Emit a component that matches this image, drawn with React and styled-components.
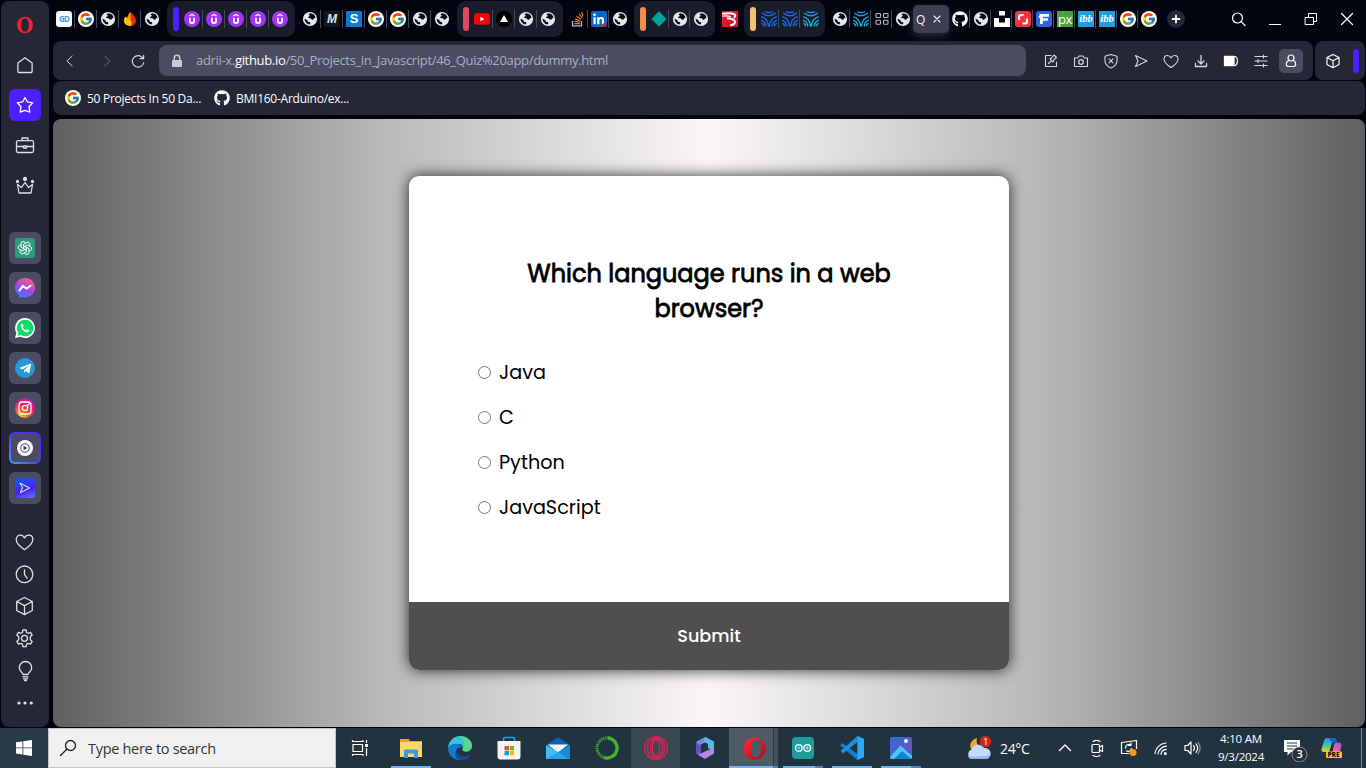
import React from "react";
import styled, { createGlobalStyle, css } from "styled-components";
import { FcGoogle } from "react-icons/fc";
import { FaGithub, FaTelegramPlane } from "react-icons/fa";
import { TbBrandOpenai } from "react-icons/tb";

const ui = `"Open Sans", "Noto Sans", sans-serif`;
const geo = `Poppins, Inter, "Open Sans", sans-serif`;

const GlobalStyle = createGlobalStyle`
  * { box-sizing: border-box; }
  body { margin: 0; background: #020410; overflow: hidden; font-family: ${ui}; }
  svg { display: block; flex: none; }
`;

/* ---------- shell ---------- */
const Desktop = styled.div`
  width: 1366px;
  height: 768px;
  display: flex;
  flex-direction: column;
  background: #020410;
`;
const Browser = styled.div`
  height: 728px;
  display: flex;
  gap: 4px;
  padding: 0 1px 1px;
`;
const Sidebar = styled.nav`
  width: 48px;
  margin-top: 1px;
  padding-top: 4px;
  background: #252834;
  border-radius: 8px;
  display: flex;
  flex-direction: column;
  align-items: center;
  color: #dcdfe6;
`;
const SideGroup = styled.div`
  display: flex;
  flex-direction: column;
  margin-top: ${(p) => p.$gap || 0}px;
`;
const SideSlot = styled.div`
  height: ${(p) => p.$h || 40}px;
  display: flex;
  align-items: center;
  justify-content: center;
`;
const SideTile = styled.div`
  width: 32px;
  height: 32px;
  border-radius: 6px;
  display: flex;
  align-items: center;
  justify-content: center;
  background: ${(p) => p.$bg || "transparent"};
  ${(p) =>
    p.$ring &&
    css`
      border: 2px solid transparent;
      background: linear-gradient(#4a4d62, #4a4d62) padding-box,
        linear-gradient(225deg, #4a22ff, #4a3cff 50%, #4f9dff) border-box;
    `}
`;
const Badge = styled.div`
  width: 20px;
  height: 20px;
  border-radius: ${(p) => p.$r};
  background: ${(p) => p.$bg};
  display: flex;
  align-items: center;
  justify-content: center;
  color: #fff;
`;
const Main = styled.div`
  width: 1312px;
  display: flex;
  flex-direction: column;
`;

/* ---------- tabs ---------- */
const TabStrip = styled.div`
  height: 41px;
  padding-top: 1px;
  display: flex;
  align-items: flex-start;
`;
const TabRun = styled.div`
  display: flex;
  height: 36px;
  align-items: center;
  margin-left: ${(p) => p.$ml || 0}px;
`;
const TabGroup = styled(TabRun)`
  margin-left: 4px;
  margin-right: 4px;
  padding: 0 4px 0 6px;
  background: #191c29;
  border-radius: 9px;
`;
const GroupBar = styled.div`
  width: 6px;
  height: 24px;
  margin-right: 2px;
  border-radius: 3px;
  background: ${(p) => p.$c};
`;
const Tab = styled.div`
  width: ${(p) => p.$w}px;
  height: 18px;
  padding-left: 3px;
  display: flex;
  align-items: center;
  border-right: 1px solid ${(p) => (p.$last ? "transparent" : "#454858")};
`;
const Fav = styled.div`
  width: 16px;
  height: 16px;
  flex: none;
  display: flex;
  align-items: center;
  justify-content: center;
  border-radius: ${(p) => p.$r || 0};
  background: ${(p) => p.$bg || "transparent"};
  color: ${(p) => p.$c || "#fff"};
  font: ${(p) => p.$font || `700 10px/14px ${ui}`};
  letter-spacing: ${(p) => p.$ls || 0};
`;
const ActiveTab = styled.div`
  width: 36px;
  height: 28px;
  margin-top: 4px;
  padding: 0 8px 0 3px;
  border-radius: 5px;
  background: #3c3f54;
  box-shadow: 0 3px 8px rgba(90, 93, 120, 0.45);
  display: flex;
  align-items: center;
  justify-content: space-between;
  color: #f0f1f4;
  font-size: 12px;
`;
const NewTab = styled.div`
  width: 18px;
  height: 18px;
  margin: 9px 0 0 8px;
  border-radius: 50%;
  background: #252834;
  display: flex;
  align-items: center;
  justify-content: center;
`;
const WindowButtons = styled.div`
  display: flex;
  margin: 8px 0 0 44px;
  gap: 16px;
`;

/* ---------- address row ---------- */
const AddressRow = styled.div`
  height: 39px;
  display: flex;
  gap: 2px;
`;
const Panel = styled.div`
  background: #252834;
  border-radius: 8px;
  display: flex;
  align-items: center;
  color: #d5d8df;
`;
const AddressPanel = styled(Panel)`
  width: 1260px;
  padding-left: 9px;
`;
const NavButtons = styled.div`
  display: flex;
  width: 97px;
`;
const UrlBox = styled.div`
  width: 867px;
  height: 31px;
  border-radius: 8px;
  background: #4a4d62;
  display: flex;
  align-items: center;
  padding-left: 12px;
  gap: 13px;
  font-size: 13px;
  letter-spacing: -0.32px;
  color: #abb0c0;
  white-space: nowrap;
  span { margin-top: -1px; }
  b { font-weight: 400; color: #fff; }
`;
const Actions = styled.div`
  display: flex;
  margin-left: 13px;
  gap: 6px;
`;
const ProfileTile = styled.div`
  width: 24px;
  height: 24px;
  border-radius: 5px;
  background: #4a4d62;
`;
const ExtPanel = styled(Panel)`
  width: 50px;
  justify-content: space-between;
  padding: 0 6px;
`;
const Accent = styled.div`
  width: 6px;
  height: 24px;
  border-radius: 3px;
  background: #4d1fff;
`;
const Bookmarks = styled(Panel)`
  height: 34px;
  margin: 1px 0 4px;
  padding-left: 12px;
  gap: 13px;
`;
const Bookmark = styled.div`
  display: flex;
  align-items: center;
  gap: 6px;
  width: ${(p) => p.$w}px;
  color: #fff;
  font-size: 12px;
  letter-spacing: ${(p) => p.$ls}px;
  white-space: nowrap;
`;
const GoogleDisc = styled.div`
  width: 16px;
  height: 16px;
  flex: none;
  border-radius: 50%;
  background: #fff;
  display: flex;
  align-items: center;
  justify-content: center;
`;

/* ---------- quiz page ---------- */
const Page = styled.main`
  flex: 1;
  border-radius: 8px;
  background: linear-gradient(90deg, #606060, #b9b9b9 25%, #fbf7f8 50%, #b9b9b9 75%, #606060);
  display: flex;
  align-items: center;
  justify-content: center;
`;
const Card = styled.section`
  width: 600px;
  height: 494px;
  border-radius: 10px;
  background: #fff;
  overflow: hidden;
  box-shadow: 0 0 15px rgba(0, 0, 0, 0.8);
  font-family: ${geo};
  color: #000;
`;
const CardBody = styled.div`
  height: 426px;
  padding: 64px;
`;
const Question = styled.h2`
  margin: 0;
  padding: 16px;
  text-align: center;
  font-size: 24px;
  line-height: 35px;
  font-weight: 400;
  -webkit-text-stroke: 0.8px #000;
`;
const Options = styled.ul`
  list-style: none;
  margin: 16px 0 0;
  padding: 0;
  display: flex;
  flex-direction: column;
  gap: 16px;
`;
const Option = styled.li`
  height: 29px;
  display: flex;
  align-items: center;
  padding-left: 5px;
  gap: 8px;
  font-size: 19.2px;
`;
const Radio = styled.span`
  width: 13px;
  height: 13px;
  border: 1px solid #767676;
  border-radius: 50%;
`;
const Submit = styled.button`
  width: 100%;
  height: 68px;
  border: 0;
  padding: 0;
  background: #4f4f4f;
  color: #fff;
  font: 500 17.6px ${geo};
`;

/* ---------- taskbar ---------- */
const Taskbar = styled.footer`
  height: 40px;
  background: #223340;
  display: flex;
  color: #fff;
`;
const StartButton = styled.div`
  width: 48px;
  display: flex;
  align-items: center;
  justify-content: center;
  background: #263a47;
`;
const SearchBox = styled.div`
  width: 288px;
  background: #f1f1f1;
  border: 1px solid #c4c4c4;
  display: flex;
  align-items: center;
  padding-left: 10px;
  gap: 11px;
  color: #333;
  font-size: 14.5px;
  letter-spacing: -0.3px;
`;
const TaskView = styled.div`
  width: 50px;
  display: flex;
  align-items: center;
  padding-left: 15px;
`;
const TaskApp = styled.div`
  width: 49px;
  display: flex;
  flex-direction: column;
  align-items: center;
  padding-top: 8px;
  background: ${(p) => p.$bg || "transparent"};
  justify-content: space-between;
`;
const Underline = styled.div`
  width: ${(p) => p.$w || 0}px;
  height: 2px;
  background: linear-gradient(90deg, #76b0f7 ${(p) => p.$split || 100}%, #4f82c0 0);
`;
const Tray = styled.div`
  margin-left: auto;
  width: 400px;
  display: flex;
  align-items: center;
`;
const Temp = styled.span`
  width: 50px;
  padding-left: 6px;
  font-size: 14px;
  letter-spacing: -0.35px;
`;
const TrayIcons = styled.div`
  display: flex;
  width: 165px;
  padding-left: 9px;
  gap: 8px;
`;
const Clock = styled.div`
  width: 64px;
  text-align: center;
  font-size: 11.5px;
  line-height: 18px;
  letter-spacing: -0.22px;
  white-space: nowrap;
`;
const Notice = styled.div`
  width: 34px;
  margin-left: 9px;
`;
const Copilot = styled.svg`
  margin-left: 5px;
`;
const PeekEdge = styled.div`
  width: 5px;
  height: 40px;
  margin-left: auto;
  border-left: 1px solid #71808a;
`;

/* ---------- drawings ---------- */
const Line = ({ s = 24, v = 24, w = 1.3, children, ...rest }) => (
  <svg width={s} height={s} viewBox={`0 0 ${v} ${v}`} fill="none" stroke="currentColor" strokeWidth={w} strokeLinecap="round" strokeLinejoin="round" {...rest}>
    {children}
  </svg>
);
const ForwardIcon = styled(Line)`
  margin-left: 18px;
`;
const ReloadIcon = styled(Line)`
  margin-left: 13px;
`;
const Globe = () => (
  <Fav>
    <svg width="16" height="16" viewBox="0 0 16 16">
      <circle cx="8" cy="8" r="7.1" fill="#e6e8ec" />
      <path d="M8.3 2.200c-.6.5-1.600.5-1.700 1.100-.2.900 1.200.8 1.200 1.500 0 .8-1.500.7-1.700 1.500-.1.700.9 1 1.800.9.9 0 1.400.3 1.600 1.100.3.800 1.400.6 2-.1.600-.8 1-1.200 2-1.200A5.600 5.600 0 0 0 8.300 2.200zM2.600 7.400c1 1 1.800 1 2.600 1.500.8.600.2 1.400 1 1.900.8.400 1.800.1 2.100 1 .2.700-.5 1.200-.9 1.700C4.800 13 2.600 10.600 2.600 7.400z" fill="#090c18" />
    </svg>
  </Fav>
);
const Google = () => <GoogleDisc><FcGoogle size={14} /></GoogleDisc>;
const Udemy = () => (
  <Fav $r="50%" $bg="#a335ee">
    <svg width="16" height="16" viewBox="0 0 16 16" fill="none" stroke="#fff">
      <path d="M5.500 5l2.500-1.600L10.500 5" strokeWidth="1.300" />
      <path d="M5.900 6.800v3.100a2.100 2.100 0 0 0 4.200 0V6.800" strokeWidth="1.800" />
    </svg>
  </Fav>
);
const Rings = ({ a = "#1a6cf2", b = "#1a6cf2" }) => {
  const id = "g" + a.slice(1) + b.slice(1);
  const arcs = (
    <>
      <path d="M4.200 .2a5.800 5.800 0 0 0 7.600 0" />
      <path d="M1.600 1.700a9.300 9.300 0 0 0 12.800 0" />
      <path d="M.6 4.300C3 5.300 6 7 8 7s5-1.700 7.400-2.700" opacity="0" />
    </>
  );
  return (
    <Fav>
      <svg width="16" height="16" viewBox="0 0 16 16" fill="none" stroke={`url(#${id})`} strokeWidth="1.400" strokeLinecap="round">
        <defs>
          <linearGradient id={id} gradientUnits="userSpaceOnUse" x1="0" y1="0" x2="0" y2="16">
            <stop offset="0" stopColor={a} /><stop offset="1" stopColor={b} />
          </linearGradient>
        </defs>
        <path d="M4.500 .9q3.500 1.300 7 0M1.700 2.200q6.300 5.200 12.600 0" />
        <path d="M.6 5.900q6 1.500 6.900 8.900M.4 9.300q3.700 1.200 4.300 5.500M.9 12.600q1.300.6 1.600 2" />
        <path d="M15.400 5.900q-6 1.500-6.900 8.900M15.600 9.300q-3.700 1.200-4.300 5.500M15.100 12.600q-1.300.6-1.600 2" />
      </svg>
    </Fav>
  );
};
const OperaO = ({ s = 24, c = "#fa1e35" }) => (
  <svg width={s} height={s} viewBox="0 0 24 24">
    <defs>
      <linearGradient id="op" x1="0" y1="0" x2="1" y2="1">
        <stop offset="0" stopColor="#ff2a3c" /><stop offset="1" stopColor="#a80f16" />
      </linearGradient>
    </defs>
    <path fillRule="evenodd" fill={c} d="M12 1C5.500 1 1.500 6 1.500 12s4 11 10.500 11 10.500-5 10.500-11S18.500 1 12 1zm0 2c3.200 0 5.200 3.800 5.200 9s-2 9-5.200 9-5.200-3.800-5.200-9 2-9 5.200-9z" />
  </svg>
);
const Cube = (p) => (
  <Line {...p}>
    <path d="M12 3.500l7.800 4v9L12 20.600l-7.800-4.100v-9zM4.200 7.500L12 11.600l7.800-4.100M12 11.600v9" />
  </Line>
);
const Heart = (p) => (
  <Line {...p}><path d="M12 19.800C6.500 16 3.700 13 3.700 9.600c0-2.700 1.900-4.400 4.100-4.400 1.800 0 3.300 1 4.200 2.700.9-1.700 2.400-2.700 4.200-2.700 2.200 0 4.100 1.700 4.100 4.400 0 3.400-2.800 6.400-8.300 10.200z" /></Line>
);

const Favicons = {
  globe: <Globe />,
  google: <Google />,
  udemy: <Udemy />,
  gd: <Fav $bg="#fff" $r="3px" $c="#3d9be9" $font={`700 8px/14px ${ui}`} $ls="-.8px">GD</Fav>,
  fire: (
    <Fav>
      <svg width="16" height="16" viewBox="0 0 16 16">
        <path d="M8.500 1c3 2.500 5.500 5.800 5.500 8.700 0 3-2.500 5.300-5.800 5.300-3.500 0-6.200-2.200-6.200-5.200 0-1.600.6-3 1.500-4l1.600 1.500C5.700 4.700 7 2.500 8.500 1z" fill="#dd2c00" />
        <path d="M3.500 5.800l5.500 4c1 1.800.8 3.700-.3 5.200C4.800 15.200 2 12.800 2 9.800c0-1.600.6-3 1.500-4z" fill="#ffc400" />
        <path d="M5.100 7.300C5.700 4.700 7 2.500 8.500 1l.4 8.800z" fill="#ff9100" />
      </svg>
    </Fav>
  ),
  m: <Fav $bg="#14151c" $font={`italic 700 12px/16px "Liberation Sans", sans-serif`} $c="#e0e0e2">M</Fav>,
  s: <Fav $bg="#0b7ad1" $font={`700 13px/16px "Liberation Sans", sans-serif`}>S</Fav>,
  youtube: (
    <Fav>
      <svg width="16" height="16" viewBox="0 0 16 16"><rect y="2.300" width="16" height="11.500" rx="2.500" fill="#f00" /><path d="M6.400 5.700v4.600l4-2.300z" fill="#fff" /></svg>
    </Fav>
  ),
  vercel: (
    <Fav $bg="#000" $r="50%">
      <svg width="16" height="16" viewBox="0 0 16 16"><path d="M8 4l4 7H4z" fill="#fff" /></svg>
    </Fav>
  ),
  stack: (
    <Fav>
      <svg width="16" height="16" viewBox="0 0 16 16" fill="none">
        <path d="M2.500 10v4.800h9V10" stroke="#bcbbbb" strokeWidth="1.300" />
        <path d="M4.300 12.600h5.500M4.400 10.300l5.500 1M5 7.800l5.200 2.200M6.500 5l4.500 3.500M9 2.600l3.300 4.500M11.800 1l1.200 4.500" stroke="#f48024" strokeWidth="1.100" />
      </svg>
    </Fav>
  ),
  linkedin: (
    <Fav $bg="#0a66c2" $r="2px">
      <svg width="16" height="16" viewBox="0 0 16 16">
        <path d="M2.500 6.200h2.200v7H2.500zM6.200 6.200h2.100v1c.5-.8 1.200-1.200 2.200-1.200 1.900 0 2.600 1.200 2.600 3.200v4h-2.200V9.600c0-1-.3-1.700-1.200-1.700s-1.300.7-1.300 1.700v3.600H6.200z" fill="#fff" />
        <circle cx="3.600" cy="3.800" r="1.300" fill="#fff" /><circle cx="13.500" cy="14" r="2" fill="#e0102a" />
      </svg>
    </Fav>
  ),
  diamond: (
    <Fav><svg width="16" height="16" viewBox="0 0 16 16"><path d="M8 .3L15.700 8 8 15.700.3 8z" fill="#00a19b" /></svg></Fav>
  ),
  brand: (
    <Fav $bg="#e01530">
      <svg width="16" height="16" viewBox="0 0 16 16" fill="none" stroke="#fff">
        <path d="M0 2.800c5-.8 10.500-.6 12.500.6 1.300.9.800 2.500-.7 3.400M5 7.300c4 .2 6.500 1 7.800 2.700 1 2-1 4-4.500 4.200" strokeWidth="1.900" />
        <path d="M0 5.200c4-.6 7-.2 9 .8" strokeWidth="1.100" />
      </svg>
    </Fav>
  ),
  ringsBlue: <Rings />,
  ringsCyan: <Rings a="#1590f0" b="#18c4e0" />,
  grid: (
    <Fav>
      <svg width="16" height="16" viewBox="0 0 16 16" fill="none" stroke="#b4b8c2" strokeWidth="1.100">
        <rect x="2" y="2.500" width="4.500" height="4" rx=".8" /><rect x="9.500" y="2.500" width="4.500" height="4" rx=".8" />
        <rect x="2" y="9.300" width="4.500" height="4" rx=".8" /><rect x="9.500" y="9.300" width="4.500" height="4" rx=".8" />
      </svg>
    </Fav>
  ),
  github: <Fav><FaGithub size={16} /></Fav>,
  unsplash: (
    <Fav><svg width="16" height="16" viewBox="0 0 16 16" fill="#fff"><path d="M5 0h6v4.500H5zM0 7h5v4.500h6V7h5v9H0z" /></svg></Fav>
  ),
  shutter: (
    <Fav $bg="#f5323f" $r="3px">
      <svg width="16" height="16" viewBox="0 0 16 16" fill="none" stroke="#fff" strokeWidth="2.200"><path d="M8.500 4H6a2 2 0 0 0-2 2v3M7.500 12.500H10a2 2 0 0 0 2-2V7.500" /></svg>
    </Fav>
  ),
  freepik: (
    <Fav $bg="#2f65e0" $r="3px">
      <svg width="16" height="16" viewBox="0 0 16 16" fill="#fff"><path d="M3.500 3h9.500v2.700H6.800v1.600h5.200v2.500H6.800V13H4V7H2.800V5H3.500z" /></svg>
    </Fav>
  ),
  px: <Fav $bg="#48a23f" $font={`400 13px/14px ${ui}`} $ls="-.5px">px</Fav>,
  ibb: <Fav $bg="#1f9fdf" $font={`italic 700 10.500px/14px "Liberation Serif", serif`}>ibb</Fav>,
};

const Run = ({ items, w }) =>
  items.map((k, i) => <Tab key={i} $w={w} $last={i === items.length - 1}>{Favicons[k]}</Tab>);

const Tabs = () => (
  <TabStrip>
    <TabRun><Run w={22} items={["gd", "google", "globe", "fire", "globe"]} /></TabRun>
    <TabGroup><GroupBar $c="#4d1fff" /><Run w={22} items={["udemy", "udemy", "udemy", "udemy", "udemy"]} /></TabGroup>
    <TabRun><Run w={22} items={["globe", "m", "s", "google", "google", "globe", "globe"]} /></TabRun>
    <TabGroup><GroupBar $c="#e04a60" /><Run w={22} items={["youtube", "vercel", "globe", "globe"]} /></TabGroup>
    <TabRun><Run w={21} items={["stack", "linkedin", "globe"]} /></TabRun>
    <TabGroup><GroupBar $c="#f28c47" /><Run w={21} items={["diamond", "globe", "globe"]} /></TabGroup>
    <TabRun><Run w={21} items={["brand"]} /></TabRun>
    <TabGroup><GroupBar $c="#f0c473" /><Run w={21} items={["ringsBlue", "ringsBlue", "ringsCyan"]} /></TabGroup>
    <TabRun><Run w={21} items={["globe", "ringsCyan", "grid", "globe"]} /></TabRun>
    <ActiveTab>
      <span>Q</span>
      <Line s={8} v={8} w={1.1}><path d="M1 1l6 6M7 1L1 7" /></Line>
    </ActiveTab>
    <TabRun><Run w={21} items={["github", "globe", "unsplash", "shutter", "freepik", "px", "ibb", "ibb", "google", "google"]} /></TabRun>
    <NewTab><Line s={10} v={10} w={1.8} color="#fff"><path d="M5 1.500v7M1.500 5h7" /></Line></NewTab>
    <WindowButtons>
      <Line s={20} v={20} color="#fff" w={1.200}><circle cx="8.500" cy="9" r="5" /><path d="M12.200 12.700L16 16.500" /></Line>
      <Line s={20} v={20} color="#fff" strokeLinecap="butt" w={1}><path d="M4 15.500h12" /></Line>
      <Line s={20} v={20} color="#fff" w={1} strokeLinejoin="miter"><path d="M4.500 8.500h8v7h-8zM7.500 8V4.500h8v8H13" /></Line>
      <Line s={20} v={20} color="#fff" w={1.200}><path d="M4.500 4.500l11 11M15.500 4.500l-11 11" /></Line>
    </WindowButtons>
  </TabStrip>
);

const Toolbar = () => (
  <AddressRow>
    <AddressPanel>
      <NavButtons>
        <Line s={18}><path d="M13.500 5.500L6.500 12l7 6.500" /></Line>
        <ForwardIcon s={18} color="#6a6d7a"><path d="M9 5.500l7 6.500-7 6.500" /></ForwardIcon>
        <ReloadIcon s={18} w={1.600}><path d="M18.800 8.500A7.700 7.700 0 1 0 19.700 14M19.500 4.300v4.600h-4.700" /></ReloadIcon>
      </NavButtons>
      <UrlBox>
        <svg width="12" height="14" viewBox="0 0 12 14"><rect x="1" y="6" width="10" height="7" rx="1" fill="#c9ccd4" /><path d="M3.300 6V4a2.700 2.700 0 0 1 5.400 0v2" fill="none" stroke="#c9ccd4" strokeWidth="1.500" /></svg>
        <span>adrii-x.<b>github.io</b>/50_Projects_in_Javascript/46_Quiz%20app/dummy.html</span>
      </UrlBox>
      <Actions>
        <Line><path d="M12 6.500H6.500v11h11V13M9.500 14.500l3-3M11 10l3 3 1-2.500 2.500-2-2.500-2.500-2 2.500z" strokeWidth="1.100" /></Line>
        <Line><path d="M5.500 9h3l1.500-2h4l1.500 2h3v8.500h-13z" strokeWidth="1.100" /><circle cx="12" cy="13" r="2.300" /></Line>
        <Line><path d="M12 5.500l6 1.700v4.500c0 3.400-2.200 5.600-6 7.200-3.800-1.600-6-3.800-6-7.200V7.200zM10 9.800l4 4M14 9.800l-4 4" strokeWidth="1.100" /></Line>
        <Line><path d="M6.500 6.500L18 12 6.500 17.500 9 12z" strokeWidth="1.100" /></Line>
        <Line><path d="M12 18.500c-4.500-3-7-5.500-7-8.300 0-2.200 1.500-3.700 3.400-3.700 1.500 0 2.800.8 3.600 2.300.8-1.500 2.100-2.300 3.600-2.300 1.900 0 3.400 1.500 3.400 3.700 0 2.800-2.500 5.300-7 8.300z" strokeWidth="1.100" /></Line>
        <Line><path d="M12 6.500v8.300M9 12l3 3 3-3M6.500 14.500V17.500h11v-3" /></Line>
        <Line color="#fff"><rect x="5.500" y="7.500" width="9.500" height="9" fill="#fff" /><path d="M15.500 7.500h1c1.500 1 2 2.800 2 4.500s-.5 3.500-2 4.500h-1" strokeWidth="1.100" /></Line>
        <Line w={1.150}><path d="M6 7.500h12M6 12h12M6 16.500h12M14.500 6v3M9 10.500v3M14.500 15v3" /></Line>
        <ProfileTile>
          <Line color="#fff" w={1.200}><circle cx="12" cy="9" r="3" /><path d="M9.600 11.500c-1.600.7-2.300 2-2.300 3.500 0 1.600 1 2.500 2.300 2.500h4.800c1.300 0 2.300-.9 2.300-2.500 0-1.500-.7-2.800-2.300-3.500" /></Line>
        </ProfileTile>
      </Actions>
    </AddressPanel>
    <ExtPanel>
      <Cube s={24} w={1.500} viewBox="-3.500 -3.500 31 31" color="#fff" />
      <Accent />
    </ExtPanel>
  </AddressRow>
);

const Side = () => (
  <Sidebar>
    <SideGroup>
      <SideSlot><OperaO s={18} /></SideSlot>
      <SideSlot><Line><path d="M4.900 10L12 4.800l7.100 5.200v8.500a1 1 0 0 1-1 1H5.900a1 1 0 0 1-1-1z" /></Line></SideSlot>
      <SideSlot>
        <SideTile $bg="#4d1fff">
          <Line color="#fff"><path d="M12 4.500l2.300 4.300 5.400 1-3.700 3.900.8 5.400-4.800-1.800-4.800 1.800.8-5.400-3.700-3.900 5.400-1z" /></Line>
        </SideTile>
      </SideSlot>
      <SideSlot><Line><rect x="3.500" y="7.700" width="17" height="11.800" rx="1.500" /><path d="M9 7.500V5h6v2.500M3.500 13.500h7M13.500 13.500h7M10.500 13h3v2h-3z" /></Line></SideSlot>
      <SideSlot>
        <Line><path d="M6 20h12l1.500-8.500-4 3L12 9.500l-3.500 5-4-3z" /><circle cx="12" cy="6" r="1.500" fill="currentColor" /><circle cx="4.500" cy="8.500" r="1" fill="currentColor" /><circle cx="19.500" cy="8.500" r="1" fill="currentColor" /></Line>
      </SideSlot>
    </SideGroup>
    <SideGroup $gap={23}>
      <SideSlot><SideTile $bg="#4a4d62"><Badge $r="3px" $bg="#2a9d7c"><TbBrandOpenai size={16} strokeWidth={1.5} /></Badge></SideTile></SideSlot>
      <SideSlot>
        <SideTile $bg="#4a4d62">
          <svg width="20" height="20" viewBox="0 0 20 20">
            <defs><linearGradient id="ms" x1="0.200" y1="1" x2=".7" y2="0"><stop offset="0" stopColor="#1d8bff" /><stop offset=".45" stopColor="#9a48f8" /><stop offset="1" stopColor="#ff5f78" /></linearGradient></defs>
            <path d="M10 0c5.700 0 10 4.200 10 9.700s-4.300 9.700-10 9.700c-1 0-2-.1-2.900-.4L4 20v-3C1.500 15.300 0 12.700 0 9.700 0 4.200 4.300 0 10 0z" fill="url(#ms)" />
            <path d="M4.500 12.500l3.300-4.600 3.700 2.800 4-3" fill="none" stroke="#fff" strokeWidth="2" strokeLinejoin="round" strokeLinecap="round" />
          </svg>
        </SideTile>
      </SideSlot>
      <SideSlot>
        <SideTile $bg="#4a4d62">
          <svg width="20" height="20" viewBox="0 0 20 20">
            <path d="M10 0a10 10 0 1 1-4.800 18.800L0 20l1.400-5A10 10 0 0 1 10 0z" fill="#fff" />
            <path d="M10 1.700a8.300 8.300 0 1 1-4.300 15.400L2.400 18l.9-3.200A8.300 8.300 0 0 1 10 1.700z" fill="#0fdc66" />
            <path d="M7.200 5.500c-.9.200-1.500 1.100-1.400 2.200.3 3.200 3.700 6.400 6.500 6.500 1.100 0 2-.7 2.100-1.900l-2.500-1.200-1.100 1.200c-1.300-.5-2.500-1.700-3-3l1-1z" fill="#fff" />
          </svg>
        </SideTile>
      </SideSlot>
      <SideSlot><SideTile $bg="#4a4d62"><Badge $r="50%" $bg="#2899d8"><FaTelegramPlane size={13} /></Badge></SideTile></SideSlot>
      <SideSlot><SideTile $bg="#4a4d62"><Badge $r="50%" $bg="radial-gradient(circle at 25% 105%, #fdc43a 10%, #fd5a2a 35%, #f01c6c 60%, #a01ad8 95%)"><Line s={16} w={1.900}><rect x="3" y="3" width="18" height="18" rx="5" /><circle cx="12" cy="12" r="4" /><circle cx="17" cy="7" r=".7" /></Line></Badge></SideTile></SideSlot>
      <SideSlot>
        <SideTile $ring>
          <svg width="16" height="16" viewBox="0 0 16 16"><circle cx="8" cy="8" r="8" fill="#fff" /><circle cx="8" cy="8" r="4.300" fill="none" stroke="#44475a" strokeWidth="1" /><path d="M6.500 5.700v4.600l3.600-2.300z" fill="#33364a" /></svg>
        </SideTile>
      </SideSlot>
      <SideSlot><SideTile $bg="#4a4d62"><Badge $r="3px" $bg="linear-gradient(160deg, #1c4ff0 20%, #4a22f0 60%, #5a7cff)"><Line s={14} w={1.600}><path d="M4 4l16 8-16 8 3.500-8z" /></Line></Badge></SideTile></SideSlot>
    </SideGroup>
    <SideGroup $gap={18}>
      <SideSlot $h={32}><Heart viewBox=".5 0 24 24" /></SideSlot>
      <SideSlot $h={32}><Line viewBox=".5 -.3 24 24"><circle cx="12" cy="12" r="8.300" /><path d="M12 7.500V12l2.500 3.800" /></Line></SideSlot>
      <SideSlot $h={32}><Cube viewBox=".5 0 24 24" /></SideSlot>
      <SideSlot $h={32}>
        <Line viewBox=".5 -.3 24 24"><path d="M10.400 3.700h3.200l.5 2.500 1.500.8 2.400-.9 1.700 2.700-1.900 1.700v2.900l1.900 1.700-1.700 2.800-2.400-.9-1.500.8-.5 2.500h-3.200l-.5-2.500-1.500-.8-2.400.9-1.700-2.800 1.900-1.700v-2.900L4.300 8.800 6 6.100l2.400.9 1.500-.8z" /><circle cx="12" cy="12" r="3" /></Line>
      </SideSlot>
      <SideSlot $h={32}><Line viewBox="-0.500 -1.500 24 24"><path d="M9.500 15c0-2-3.700-3-3.700-6.800a6.200 6.200 0 0 1 12.400 0c0 3.800-3.700 4.800-3.700 6.800zM9.500 17.300h5M10 19.300h4M11 21h2" /></Line></SideSlot>
      <SideSlot $h={32}><Line viewBox="0 -1 24 24"><g fill="currentColor" stroke="none"><circle cx="6" cy="12" r="1.600" /><circle cx="12" cy="12" r="1.600" /><circle cx="18.300" cy="12" r="1.600" /></g></Line></SideSlot>
    </SideGroup>
  </Sidebar>
);

const Quiz = () => (
  <Page>
    <Card>
      <CardBody>
        <Question>Which language runs in a web<br />browser?</Question>
        <Options>
          {["Java", "C", "Python", "JavaScript"].map((o) => <Option key={o}><Radio />{o}</Option>)}
        </Options>
      </CardBody>
      <Submit>Submit</Submit>
    </Card>
  </Page>
);

const taskApps = [
  { w: 40, icon: <><path d="M1 3h9l1 2h12v16H1z" fill="#e9a820" /><path d="M1 6h22v15H1z" fill="#ffd766" /><path d="M5 22v-7a1.500 1.500 0 0 1 1.500-1.500h11A1.500 1.500 0 0 1 19 15v7h-4v-4.500H9V22z" fill="#3f95e6" /></> },
  { icon: <><path d="M0 12C.5 5 5.500 0 12 0s12 4.500 12 9.500c0 4-3 6-6 6-2.500 0-4-1-3.500-2.200 1-1.500.5-4.800-3-5.300C6 7.500 2 9.500 0 12z" fill="#38c3d8" /><path d="M12 0c7 0 12 4.500 12 9.500 0 4-3 6-6 6-2.500 0-4-1-3.500-2.200C18 9 16 3 12 0z" fill="#63dd71" opacity=".75" /><path d="M0 12c1.500-3 5-4.500 8.500-4.300 3.500.2 6 2.300 6 4.300-1-1-3-1-4.500 0-2.500 1.800-2.500 5.500 0 8.300 2 2 4.500 3 6 3C14 24 12 24 12 24 5 24 0 18.500 0 12z" fill="#1679d0" /><path d="M8.500 14c0 5.500 6 8.500 12.500 5.200.8-.3 1.300.3.800 1C19.500 23 16 24 12 24c-4-.5-6-5-3.500-10z" fill="#0d4f9e" /></> },
  { icon: <><path d="M6.500 6V3A1.500 1.500 0 0 1 8 1.500h8A1.500 1.500 0 0 1 17.500 3v3" fill="none" stroke="#2b9fe6" strokeWidth="1.600" /><path d="M.5 5h23v15.500a3 3 0 0 1-3 3h-17a3 3 0 0 1-3-3z" fill="#f4f4f4" /><path d="M7.500 10H12v4.300H7.500z" fill="#f25022" /><path d="M12.800 10H17v4.300h-4.200z" fill="#7fba00" /><path d="M7.500 15H12v4.300H7.500z" fill="#00a4ef" /><path d="M12.800 15H17v4.300h-4.200z" fill="#ffb900" /></> },
  { icon: <><path d="M0 9L12 1l12 8v3H0z" fill="#0f5fb5" /><path d="M2 8.500h20L12 17z" fill="#f2f4f6" /><path d="M0 9l24 14H0z" fill="#45bdf5" /><path d="M24 9v14L12 16z" fill="#1b87da" /><path d="M0 23l12-7 12 7z" fill="#2aa4ea" /></> },
  { icon: <><path d="M12.500 2A10 10 0 1 1 9 21.500" fill="none" stroke="#44b32c" strokeWidth="3.400" /><path d="M9 21.500A10 10 0 0 1 12.500 2" fill="none" stroke="#44b32c" strokeWidth="3" strokeDasharray="1.200 1" /></> },
  { bg: "#3a4853", icon: <g fill="none" stroke="#e01f55" strokeWidth="1.300"><circle cx="12" cy="12" r="11.300" /><ellipse cx="12" cy="12" rx="8.500" ry="10" /><ellipse cx="12.500" cy="12" rx="6" ry="9" /><ellipse cx="12" cy="12" rx="3.500" ry="8" /></g> },
  { icon: <><path d="M12 1l-8.500 4.500v12L8 20V8.500L14.500 5V2z" fill="#7289e0" /><path d="M12 1l9 4.500V15l-6-3V8l-4-2z" fill="#54b9ef" /><path d="M21 12v5.500L12 23l-7-4 9-4.500z" fill="#b985e0" /><path d="M3.500 7L8 9v9l-4.500-1z" fill="#6350c8" /></> },
  { bg: "linear-gradient(90deg, #4e5b66 44px, #2b3943 44px 45px, #44515b 45px)", w: 49, split: 90, icon: <path transform="translate(.5 .5)" fillRule="evenodd" fill="url(#op)" d="M12 .800C5.500.8.800 6 .8 12s4.700 11.200 11.200 11.200S23.200 18 23.200 12 18.500.8 12 .800zm1.500 2.500c3.200 0 5 3.700 5 8.700s-1.800 8.700-5 8.700-5-3.700-5-8.700 1.800-8.700 5-8.700z" /> },
  { w: 40, split: 80, icon: <><rect x="1" y="1" width="22" height="22" rx="4" fill="#1f9c9b" /><g fill="none" stroke="#eafafa" strokeWidth="1.400"><circle cx="7.800" cy="12" r="3.300" /><circle cx="16.200" cy="12" r="3.300" /><path d="M6.500 12h2.600M15 12h2.600M16.200 10.700v2.600" strokeWidth=".9" /></g></> },
  { w: 40, icon: <><path d="M17.500 0L24 3v18l-6.500 3L0 9.500 2.500 7 17.500 18z" fill="#0f7fce" /><path d="M17.500 0v6L3 17.500.5 15z" fill="#1b8fe0" /><path d="M17.500 0L24 3v18l-6.500 3z" fill="#2fa7f4" /></> },
  { w: 40, split: 76, icon: <><defs><linearGradient id="ph" x1="0" y1="0" x2="1" y2="1"><stop offset="0" stopColor="#2f6fd8" /><stop offset="1" stopColor="#7a4ab8" /></linearGradient></defs><rect x="1" y="1" width="22" height="22" rx="2" fill="url(#ph)" /><path d="M1 21L11.500 9.500 23 20v1a2 2 0 0 1-2 2H3a2 2 0 0 1-2-2z" fill="#4bc9f5" /><path d="M5 23l8-8 9 7.500-1 .5z" fill="#1484d8" /><circle cx="17" cy="5" r="2" fill="#fff" /></> },
];

const TaskbarRow = () => (
  <Taskbar>
    <StartButton>
      <svg width="16" height="16" viewBox="0 0 16 16" fill="#fff"><path d="M0 2.300l6.500-.9v6.100H0zM7.300 1.300L16 0v7.500H7.300zM0 8.300h6.500v6.200L0 13.600zM7.300 8.300H16V16l-8.700-1.300z" /></svg>
    </StartButton>
    <SearchBox>
      <Line s={18} v={18} w={1.300} color="#222"><circle cx="11.500" cy="6.500" r="5" /><path d="M7.800 10.200L1.500 16.500" /></Line>
      <span>Type here to search</span>
    </SearchBox>
    <TaskView>
      <Line s={18} v={18} w={1.200} strokeLinecap="butt" strokeLinejoin="miter"><path d="M2 5.500h9.500v7H2zM1.500 1v1.500H12V1M1.500 17v-1.500H12V17M15.500 1v3M15.500 9v8" /><path d="M14 5h3v3h-3z" fill="#fff" stroke="none" /></Line>
    </TaskView>
    {taskApps.map((a, i) => (
      <TaskApp key={i} $bg={a.bg}>
        <svg width="24" height="24" viewBox="0 0 24 24">{a.icon}</svg>
        <Underline $w={a.w} $split={a.split} />
      </TaskApp>
    ))}
    <Tray>
      <svg width="28" height="26" viewBox="0 0 28 26">
        <path d="M11 3c-1 5 .5 8 5 9l-3 4H7C2 12 4 5 11 3z" fill="#f2a73b" />
        <path d="M6 24a5 5 0 0 1-.5-9.500A7 7 0 0 1 18 13a5.500 5.500 0 0 1 2 11z" fill="#c4dafa" />
        <path d="M2 21c5 1 14 1 22-1-1 3-2 4-4 4H6c-2 0-3.500-1-4-3z" fill="#93b9f0" />
        <circle cx="19.500" cy="6.500" r="5.800" fill="#c42b1c" />
        <text x="17" y="10" fontSize="9.500" fill="#fff" fontFamily="Open Sans">1</text>
      </svg>
      <Temp>24°C</Temp>
      <TrayIcons>
        <Line w={1.400}><path d="M6.500 14.500L12 9l5.500 5.500" /></Line>
        <Line w={1.200}><rect x="7" y="8.500" width="7.500" height="8" rx="1" /><path d="M14.500 11l3-1.500v6l-3-1.500M8 5.500c2-1.200 5-1.200 7 0M8 19.500c2 1.200 5 1.200 7 0" /></Line>
        <Line w={1.200}><path d="M4.500 6.500L19.500 4.500v8M4.500 6.500v11h7M8.500 12a3.500 3.500 0 0 1 5.500-3M14 7v2.500h-2.500M14.500 12.500a3.500 3.500 0 0 1-5 2.500" /><circle cx="16" cy="16.500" r="3.500" fill="#ff9b0b" stroke="none" /></Line>
        <Line w={1.200}><path d="M6 17.500C6.500 12 11 7.500 17 7M9 18c.4-4 4-7.500 8.300-7.800M12 18.200c.3-2.400 2.500-4.600 5.300-4.800" /><circle cx="16.300" cy="17.500" r="1.500" fill="#fff" stroke="none" /></Line>
        <Line w={1.200}><path d="M4 9.500h2.700L10 6v12l-3.300-3.500H4zM12.500 9.500c1.200 1.500 1.200 3.500 0 5M15 7.800c2 2.500 2 6 0 8.500" /><path d="M17 6.200c2.800 3.400 2.800 8.200 0 11.600" opacity=".5" /></Line>
      </TrayIcons>
      <Clock>4:10 AM<br />9/3/2024</Clock>
      <Notice>
        <svg width="28" height="28" viewBox="0 0 28 28">
          <path d="M2 6h16v12H9l-3.500 3.500V18H2z" fill="#fff" /><path d="M5 9h10M5 12h10M5 15h6" stroke="#223340" />
          <circle cx="17.500" cy="20.500" r="7.500" fill="#2b3035" stroke="#8b9297" />
          <text x="14.600" y="24.300" fontSize="11" fontWeight="600" fill="#fff" fontFamily="Open Sans">3</text>
        </svg>
      </Notice>
      <Copilot width="22" height="24" viewBox="0 0 22 24">
        <defs>
          <linearGradient id="c1" x1="0" y1="0" x2="0" y2="1"><stop offset="0" stopColor="#258ff0" /><stop offset=".5" stopColor="#3fc4a8" /><stop offset="1" stopColor="#f3d01f" /></linearGradient>
          <linearGradient id="c2" x1="1" y1="0" x2="0" y2="1"><stop offset="0" stopColor="#8a55e8" /><stop offset=".5" stopColor="#f0609a" /><stop offset="1" stopColor="#ff9a5a" /></linearGradient>
        </defs>
        <path d="M6 2h7c2 0 2 2 3 4h-3c-2 0-2.500 2-3 4l-2 6H3c-2 0-3-1-2.500-3L3 5c.5-2 1-3 3-3z" fill="url(#c1)" />
        <path d="M8 2h5c2 0 2 2 3 4h-3l-2 1z" fill="#1460d8" />
        <path d="M15 6.500h3c2 0 3 1.500 2.500 3.500l-2 7c-.5 2-1.500 3-3.500 3H8c2 0 3-2 3.500-4l1.500-7c.3-1.500.8-2.500 2-2.500z" fill="url(#c2)" />
        <rect x="5" y="15.500" width="16" height="6.500" rx="1" fill="#ffc40c" />
        <text x="6.500" y="21.300" fontSize="6.500" fontWeight="800" fill="#1a1a1a" fontFamily="Open Sans">PRE</text>
      </Copilot>
      <PeekEdge />
    </Tray>
  </Taskbar>
);

export default function App() {
  return (
    <Desktop>
      <GlobalStyle />
      <Browser>
        <Side />
        <Main>
          <Tabs />
          <Toolbar />
          <Bookmarks>
            <Bookmark $w={136} $ls={-0.27}><Google />50 Projects In 50 Da...</Bookmark>
            <Bookmark $w={140} $ls={-0.25}><FaGithub size={16} />BMI160-Arduino/ex...</Bookmark>
          </Bookmarks>
          <Quiz />
        </Main>
      </Browser>
      <TaskbarRow />
    </Desktop>
  );
}
